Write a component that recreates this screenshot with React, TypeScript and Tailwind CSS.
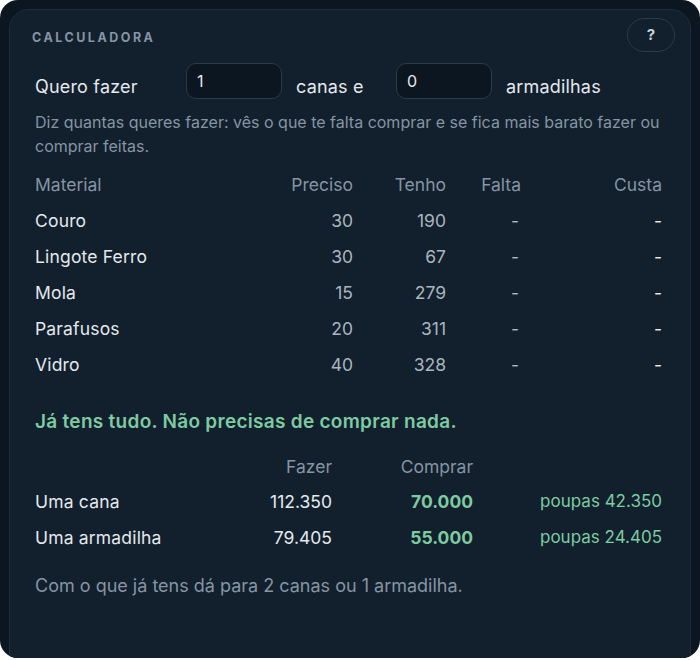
const materials = [
  { name: "Couro", need: 30, have: 190 },
  { name: "Lingote Ferro", need: 30, have: 67 },
  { name: "Mola", need: 15, have: 279 },
  { name: "Parafusos", need: 20, have: 311 },
  { name: "Vidro", need: 40, have: 328 },
];

const compare = [
  { name: "Uma cana", make: "112.350", buy: "70.000", save: "42.350" },
  { name: "Uma armadilha", make: "79.405", buy: "55.000", save: "24.405" },
];

export default function App() {
  return (
    <div
      className="w-[700px] h-[660px] bg-white"
      style={{ fontFamily: "Inter, 'Noto Sans', sans-serif" }}
    >
      <div className="h-[658px] rounded-[18px] bg-[#0c1620] overflow-hidden pt-[9px] pl-[9px] pr-[9px]">
        <div className="relative h-[700px] rounded-[20px] border border-[#1f2e3c] bg-[#121f2d] pl-[24px] pr-[28px] pt-[22px]">
          {/* Header */}
          <div className="-ml-[2px] text-[12.5px] font-bold tracking-[0.2em] text-[#8595a3] leading-none">
            CALCULADORA
          </div>
          <button className="absolute top-[8px] right-[15px] w-[48px] h-[34px] rounded-full border border-[#2b3b49] text-[15px] font-bold text-[#c9d2da] flex items-center justify-center">
            ?
          </button>

          {/* Quantities */}
          <div className="flex items-center mt-[28px] text-[18px] text-[#e4e9ee] tracking-[0.01em]">
            <span className="w-[152px] pl-[1px]">Quero fazer</span>
            <div className="w-[96px] h-[36px] rounded-[10px] border border-[#2b3b49] bg-[#0c1620] px-[10px] flex items-center text-[16px] -mt-[10px]">
              1
            </div>
            <span className="ml-[14px] w-[100px]">canas e</span>
            <div className="w-[96px] h-[36px] rounded-[10px] border border-[#2b3b49] bg-[#0c1620] px-[10px] flex items-center text-[16px] -mt-[10px]">
              0
            </div>
            <span className="ml-[14px]">armadilhas</span>
          </div>

          <p className="mt-[10px] pl-[1px] text-[16px] leading-[24px] text-[#8595a3]">
            Diz quantas queres fazer: vês o que te falta comprar e se fica mais barato fazer ou
            comprar feitas.
          </p>

          {/* Materials table */}
          <div className="mt-[10px] pl-[1px] text-[17.5px]">
            <div className="grid grid-cols-[1fr_100px_93px_75px_141px] h-[36px] items-center text-[#8595a3]">
              <span>Material</span>
              <span className="text-right">Preciso</span>
              <span className="text-right">Tenho</span>
              <span className="text-right">Falta</span>
              <span className="text-right">Custa</span>
            </div>
            {materials.map((m) => (
              <div
                key={m.name}
                className="grid grid-cols-[1fr_100px_93px_75px_141px] h-[36px] items-center"
              >
                <span className="text-[#e4e9ee] tracking-[0.01em]">{m.name}</span>
                <span className="text-right text-[#a9b5bf]">{m.need}</span>
                <span className="text-right text-[#a9b5bf]">{m.have}</span>
                <span className="text-right text-[#a9b5bf] pr-[2px]">-</span>
                <span className="text-right text-[#e4e9ee]">-</span>
              </div>
            ))}
          </div>

          <div className="mt-[24px] pl-[1px] text-[19px] font-semibold tracking-[0.015em] text-[#7dcba1]">
            Já tens tudo. Não precisas de comprar nada.
          </div>

          {/* Make vs buy */}
          <div className="mt-[14px] pl-[1px] text-[17.5px]">
            <div className="grid grid-cols-[1fr_120px_141px_189px] h-[34px] items-center text-[#8595a3]">
              <span />
              <span className="text-right">Fazer</span>
              <span className="text-right">Comprar</span>
              <span />
            </div>
            {compare.map((c) => (
              <div
                key={c.name}
                className="grid grid-cols-[1fr_120px_141px_189px] h-[36px] items-center"
              >
                <span className="text-[#e4e9ee] tracking-[0.01em]">{c.name}</span>
                <span className="text-right text-[#e4e9ee]">{c.make}</span>
                <span className="text-right font-bold text-[#7dcba1]">{c.buy}</span>
                <span className="text-right text-[#7dcba1] text-[17px]">poupas {c.save}</span>
              </div>
            ))}
          </div>

          <p className="mt-[16px] pl-[1px] text-[18px] text-[#8595a3]">
            Com o que já tens dá para 2 canas ou 1 armadilha.
          </p>
        </div>
      </div>
    </div>
  );
}
